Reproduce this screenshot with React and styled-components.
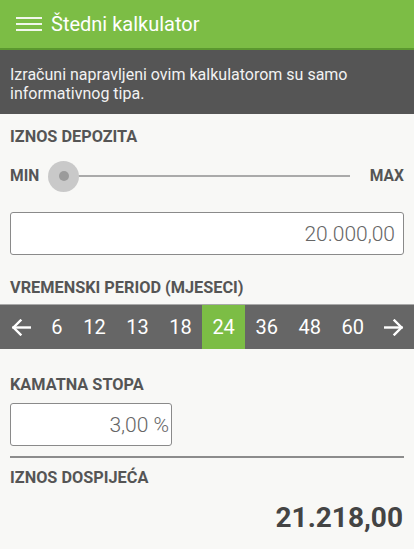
import React from 'react';
import styled, { createGlobalStyle } from 'styled-components';

const GlobalStyle = createGlobalStyle`
  body {
    margin: 0;
    background: #f8f8f6;
    font-family: Roboto, "Liberation Sans", sans-serif;
  }
`;

const periods = [6, 12, 13, 18, 24, 36, 48, 60];

const Page = styled.div`
  width: 414px;
  min-height: 549px;
  background: #f8f8f6;
`;

const Header = styled.header`
  height: 48px;
  background: #7cbd45;
  border-bottom: 2px solid #5b982f;
  display: flex;
  align-items: center;
  padding-left: 16px;
  gap: 9px;
`;

const Title = styled.h1`
  margin: 0;
  font-size: 20px;
  font-weight: 400;
  color: #fff;
`;

const Info = styled.div`
  background: #555;
  color: #f2f2f2;
  font-size: 16px;
  line-height: 19px;
  padding: 15px 10px 11px;
`;

const Section = styled.div`
  padding: 0 10px;
`;

const Label = styled.div`
  margin-top: ${(p) => p.$mt}px;
  font-size: 16.3px;
  line-height: 18px;
  font-weight: 700;
  color: #555;
`;

const SliderRow = styled.div`
  margin-top: 14px;
  height: 32px;
  display: flex;
  align-items: center;
  font-size: 15.6px;
  font-weight: 700;
  color: #555;
`;

const Track = styled.div`
  flex: 1;
  margin: 0 20px 0 9px;
  position: relative;
  display: flex;
  align-items: center;
  height: 32px;

  &::before {
    content: '';
    position: absolute;
    left: 15px;
    right: 0;
    top: 15px;
    height: 2px;
    background: #aaa;
  }
`;

const Thumb = styled.div`
  width: 31px;
  height: 31px;
  border-radius: 50%;
  background: #c9c9c9;
  display: flex;
  align-items: center;
  justify-content: center;
  position: relative;
  z-index: 1;

  &::after {
    content: '';
    width: 10px;
    height: 10px;
    border-radius: 50%;
    background: #9b9b9b;
  }
`;

const Field = styled.div`
  margin-top: ${(p) => p.$mt}px;
  width: ${(p) => p.$w};
  height: 43px;
  box-sizing: border-box;
  background: #fff;
  border: 1px solid #8a8a8a;
  border-radius: 3px;
  display: flex;
  align-items: center;
  justify-content: flex-end;
  padding-right: ${(p) => p.$pr}px;
  font-size: 21px;
  font-weight: 300;
  color: #666;
`;

const PeriodBar = styled.div`
  margin-top: 7px;
  height: 44px;
  background: #666;
  border-top: 1px solid #a9a9a9;
  display: flex;
  align-items: stretch;
`;

const Arrow = styled.div`
  width: ${(p) => (p.$grow ? 'auto' : '41px')};
  flex: ${(p) => (p.$grow ? 1 : 'none')};
  display: flex;
  align-items: center;
  justify-content: center;
`;

const Period = styled.div`
  padding: 0 10.3px;
  display: flex;
  align-items: center;
  font-size: 20px;
  color: #fff;
  background: ${(p) => (p.$active ? '#7cbd45' : 'transparent')};
`;

const Divider = styled.div`
  margin-top: 10px;
  height: 2px;
  background: #8c8c8c;
`;

const Result = styled.div`
  margin-top: 14px;
  text-align: right;
  font-size: 28px;
  line-height: 34px;
  font-weight: 700;
  color: #444;
  padding-right: 1px;
`;

const Menu = () => (
  <svg width="26" height="14" viewBox="0 0 26 14">
    <g fill="#f1f7ec">
      <rect x="0" y="0" width="26" height="2" />
      <rect x="0" y="6" width="26" height="2" />
      <rect x="0" y="12" width="26" height="2" />
    </g>
  </svg>
);

const ArrowIcon = ({ dir }) => (
  <svg
    width="20"
    height="17"
    viewBox="0 0 20 17"
    style={dir === 'right' ? { transform: 'scaleX(-1)' } : undefined}
  >
    <g fill="none" stroke="#fff" strokeWidth="2.4" strokeLinecap="square">
      <path d="M2.5 8.5H19" />
      <path d="M9.5 1.5L2.5 8.5L9.5 15.5" />
    </g>
  </svg>
);

export default function App() {
  return (
    <Page>
      <GlobalStyle />
      <Header>
        <Menu />
        <Title>Štedni kalkulator</Title>
      </Header>
      <Info>Izračuni napravljeni ovim kalkulatorom su samo informativnog tipa.</Info>

      <Section>
        <Label $mt={14}>IZNOS DEPOZITA</Label>
        <SliderRow>
          <span>MIN</span>
          <Track>
            <Thumb />
          </Track>
          <span>MAX</span>
        </SliderRow>
        <Field $mt={20} $w="100%" $pr={8}>20.000,00</Field>
        <Label $mt={24}>VREMENSKI PERIOD (MJESECI)</Label>
      </Section>

      <PeriodBar>
        <Arrow>
          <ArrowIcon dir="left" />
        </Arrow>
        {periods.map((p) => (
          <Period key={p} $active={p === 24}>
            {p}
          </Period>
        ))}
        <Arrow $grow>
          <ArrowIcon dir="right" />
        </Arrow>
      </PeriodBar>

      <Section>
        <Label $mt={27}>KAMATNA STOPA</Label>
        <Field $mt={9} $w="162px" $pr={2}>3,00 %</Field>
        <Divider />
        <Label $mt={11}>IZNOS DOSPIJEĆA</Label>
        <Result>21.218,00</Result>
      </Section>
    </Page>
  );
}
